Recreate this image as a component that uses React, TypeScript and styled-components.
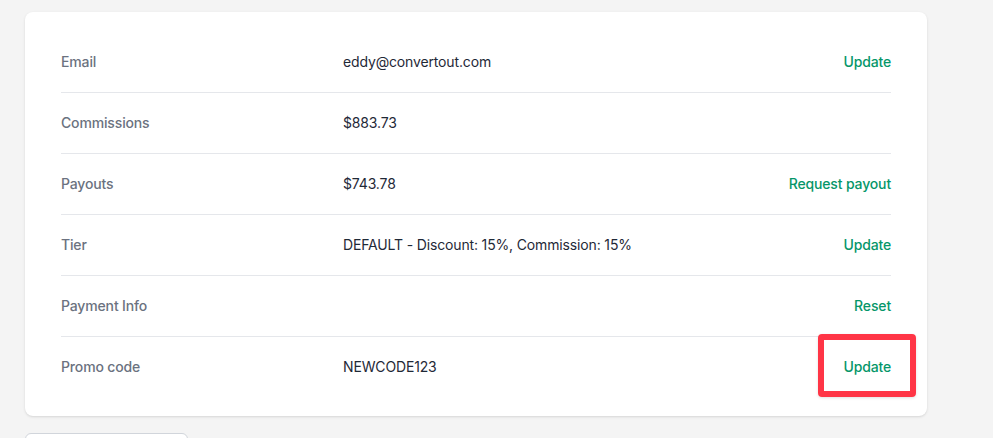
import React from 'react'
import styled, { createGlobalStyle } from 'styled-components'

const GlobalStyle = createGlobalStyle`
  html, body {
    margin: 0;
    padding: 0;
    background: #f4f4f4;
    font-family: Inter, "Noto Sans", sans-serif;
    -webkit-font-smoothing: antialiased;
  }
`

const Page = styled.div`
  padding: 12px 66px 0 25px;
  height: 438px;
  box-sizing: border-box;
  overflow: hidden;
`

const Card = styled.div`
  background: #fff;
  border-radius: 8px;
  box-shadow: 0 1px 3px rgba(0, 0, 0, 0.1), 0 1px 2px -1px rgba(0, 0, 0, 0.1);
  padding: 19px 36px;
`

const List = styled.dl`
  margin: 0;
`

const Row = styled.div<{ first?: boolean }>`
  display: grid;
  grid-template-columns: repeat(3, 1fr);
  column-gap: 16px;
  align-items: center;
  height: 61px;
  box-sizing: border-box;
  border-top: ${(p) => (p.first ? 'none' : '1px solid #e5e7eb')};
  font-size: 14px;
  line-height: 20px;
  letter-spacing: -0.15px;
`

const Label = styled.dt`
  color: #6b7280;
  font-weight: 500;
`

const Value = styled.dd`
  grid-column: span 2;
  margin: 0;
  display: flex;
  align-items: center;
  color: #1f2937;
`

const ValueText = styled.span`
  flex: 1;
`

const Action = styled.span`
  position: relative;
  margin-left: 16px;
`

const ActionButton = styled.button`
  background: none;
  border: 0;
  padding: 0;
  font: inherit;
  letter-spacing: inherit;
  font-weight: 500;
  color: #059669;
  cursor: pointer;
`

const Highlight = styled.span`
  position: absolute;
  left: -25px;
  right: -25px;
  top: -23px;
  bottom: -20px;
  border: 6px solid #ff3546;
  border-radius: 4px;
  box-shadow: 0 1px 3px rgba(0, 0, 0, 0.12);
  pointer-events: none;
`

const Footer = styled.div`
  margin-top: 17px;
`

const GhostButton = styled.button`
  width: 163px;
  height: 34px;
  background: #fff;
  border: 1px solid #d1d5db;
  border-radius: 6px;
`

type Item = { label: string; value?: string; action?: string; highlight?: boolean }

const items: Item[] = [
  { label: 'Email', value: 'eddy@convertout.com', action: 'Update' },
  { label: 'Commissions', value: '$883.73' },
  { label: 'Payouts', value: '$743.78', action: 'Request payout' },
  { label: 'Tier', value: 'DEFAULT - Discount: 15%, Commission: 15%', action: 'Update' },
  { label: 'Payment Info', action: 'Reset' },
  { label: 'Promo code', value: 'NEWCODE123', action: 'Update', highlight: true },
]

export default function App() {
  return (
    <Page>
      <GlobalStyle />
      <Card>
        <List>
          {items.map((item, i) => (
            <Row key={item.label} first={i === 0}>
              <Label>{item.label}</Label>
              <Value>
                <ValueText>{item.value}</ValueText>
                {item.action && (
                  <Action>
                    <ActionButton>{item.action}</ActionButton>
                    {item.highlight && <Highlight />}
                  </Action>
                )}
              </Value>
            </Row>
          ))}
        </List>
      </Card>
      <Footer>
        <GhostButton />
      </Footer>
    </Page>
  )
}
